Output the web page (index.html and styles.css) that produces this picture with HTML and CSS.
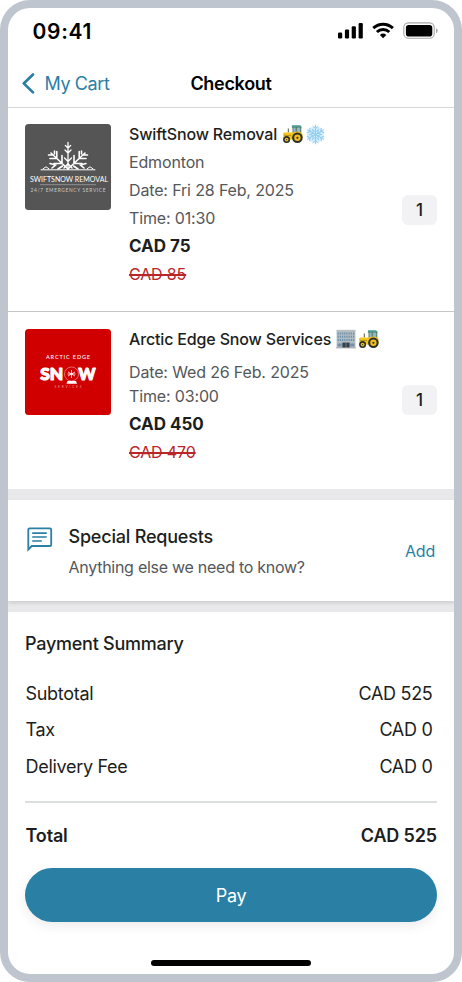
FILE: index.html
```html
<!DOCTYPE html>
<html lang="en">
<head>
<meta charset="utf-8">
<title>Checkout</title>
<link rel="stylesheet" href="styles.css">
</head>
<body>
<svg class="defs" width="0" height="0" aria-hidden="true">
  <symbol id="tractor" viewBox="0 0 22 20">
    <path d="M11.500 2.500h6.500l1 1.200v6h-8z" fill="#8fb9c6"/>
    <path d="M10 1.200h8.200l1.300 1.500v1H9.800z" fill="#4d9a94"/>
    <path d="M11 3v8M14.200 3v7M18.800 3v7" stroke="#4c6a4a" stroke-width=".9"/>
    <path d="M6.300 4.500v4" stroke="#55523a" stroke-width="1"/>
    <path d="M1 9.600 2.200 8.400H12l1.500 2.300v4.800H1.600z" fill="#f5c61c"/>
    <path d="M2 11.400h7" stroke="#a0861a" stroke-width=".8"/>
    <path d="M9 14.500V11c2-4 9-5 11.500-1v4z" fill="#f0bf1d"/>
    <circle cx="4.600" cy="15.600" r="3.500" fill="#2d2e26"/>
    <circle cx="4.600" cy="15.600" r="1.900" fill="#f0bf1d"/>
    <circle cx="4.600" cy="15.600" r=".7" fill="#433b1c"/>
    <circle cx="15.400" cy="13.800" r="5.300" fill="#2d2e26"/>
    <circle cx="15.400" cy="13.800" r="3.200" fill="#f0bf1d"/>
    <circle cx="15.400" cy="13.800" r="1.100" fill="#433b1c"/>
  </symbol>
  <symbol id="snowflake" viewBox="0 0 22 22">
    <circle cx="11" cy="11" r="9" fill="#d3edfa"/>
    <g stroke="#8fcdf0" stroke-width="1" stroke-linecap="round" fill="none">
      <path id="arm" d="M11 11V1.200M8.400 2.400 11 4.800l2.600-2.400M8 5.800l3 2.600 3-2.600"/>
      <use href="#arm" transform="rotate(60 11 11)"/>
      <use href="#arm" transform="rotate(120 11 11)"/>
      <use href="#arm" transform="rotate(180 11 11)"/>
      <use href="#arm" transform="rotate(240 11 11)"/>
      <use href="#arm" transform="rotate(300 11 11)"/>
    </g>
  </symbol>
  <symbol id="office" viewBox="0 0 20 20">
    <path d="M.6 1.200h18.800V19H.6z" fill="#b0bcc4"/>
    <path d="M.6.8h18.800v1.600H.6z" fill="#b9c0c3"/>
    <path d="M1.600 4.500h17M1.600 7.700h17M1.600 10.900h17" stroke="#6f90a9" stroke-width="2" stroke-dasharray="1.200 1"/>
    <path d="M1.600 14.600h4.200v3H1.600zM14.200 14.600h4.200v3h-4.200z" fill="#7790a3"/>
    <path d="M6.400 13.600h7.200V19H6.400z" fill="#343f49"/>
    <path d="M10 14v5" stroke="#8a98a3" stroke-width=".7"/>
    <path d="M0 18.400h20v1H0z" fill="#a9adb0"/>
  </symbol>
</svg>
<main class="phone">
  <header class="status">
    <span class="clock">09:41</span>
    <svg class="status-icons" width="100" height="18" viewBox="0 0 100 18">
      <rect x="0" y="9.500" width="4.200" height="6" rx="1.200"/>
      <rect x="6.900" y="6.500" width="4.200" height="9" rx="1.200"/>
      <rect x="13.700" y="3.200" width="4.200" height="12.300" rx="1.200"/>
      <rect x="20.600" y="0" width="4.200" height="15.500" rx="1.200"/>
      <g fill="none" stroke="#000" stroke-width="2.900">
        <path d="M35.300 5.100a14.200 14.200 0 0 1 19.600 0"/>
        <path d="M38.900 9a9 9 0 0 1 12.400 0"/>
      </g>
      <path d="M45.100 15.300 41.900 12a4.800 4.800 0 0 1 6.400 0z"/>
      <rect x="65.800" y="-.1" width="30.400" height="15.400" rx="4.600" fill="none" stroke="#a6a6a6" stroke-width="1.100"/>
      <rect x="67.900" y="1.900" width="26.400" height="11.600" rx="2.800"/>
      <path d="M98 5.200c2.200.8 2.200 4.200 0 5z" fill="#a6a6a6"/>
    </svg>
  </header>

  <nav class="nav">
    <a class="back">
      <svg width="13" height="21" viewBox="0 0 13 21"><path d="M11 1.500 1.700 10.400 11 19.400" fill="none" stroke="#2a7fa5" stroke-width="2.700" stroke-linecap="round" stroke-linejoin="round"/></svg>
      <span>My Cart</span>
    </a>
    <h1>Checkout</h1>
  </nav>

  <section class="item item-first">
    <svg class="thumb" width="86" height="86" viewBox="0 0 86 86">
      <rect width="86" height="86" rx="3.500" fill="#555"/>
      <g stroke="#fff" fill="none" stroke-linecap="round">
        <path d="M43 45V18.500M40.400 21.500l2.600 2.600 2.600-2.600M40 26l3 3 3-3M39.500 34l3.500 3.500 3.500-3.500" stroke-width="1.300"/>
        <g stroke-width="1.600">
          <path d="M43 45 26 29M25 34.500h6.800V27.500M29 39.500h8v-8M23.500 31h4M29.500 27v3"/>
          <path d="M43 45 60 29M61 34.500h-6.800V27.500M57 39.500h-8v-8M62.500 31h-4M56.500 27v3"/>
          <path d="M27 44l3.500-3-5.500-1.500M59 44l-3.500-3 5.500-1.500M33 45l4.500-3M53 45l-4.500-3M39 44l4-4 4 4"/>
        </g>
        <path d="M16 45.800h54M18 44.800l3-2 3 2M62 44.800l3-2 3 2" stroke-width="1"/>
      </g>
      <text class="swift-name" x="5" y="58.300" textLength="78" lengthAdjust="spacingAndGlyphs">SWIFTSNOW REMOVAL</text>
      <path d="M15 60.700h56" stroke="#aaa" stroke-width=".7"/>
      <text class="swift-tag" x="5.500" y="67.500" textLength="75" lengthAdjust="spacing">24/7 EMERGENCY SERVICE</text>
    </svg>
    <div class="info">
      <h2><span>SwiftSnow Removal</span>
        <svg class="emoji" width="22" height="20"><use href="#tractor"/></svg><svg class="emoji" width="21" height="21"><use href="#snowflake"/></svg></h2>
      <p>Edmonton</p>
      <p>Date: Fri 28 Feb, 2025</p>
      <p>Time: 01:30</p>
      <p class="price">CAD 75</p>
      <p class="old"><s>CAD 85</s></p>
    </div>
    <span class="qty">1</span>
  </section>

  <section class="item item-second">
    <svg class="thumb" width="86" height="86" viewBox="0 0 86 86">
      <rect width="86" height="86" rx="3.500" fill="#d00000"/>
      <text class="arctic-top" x="21" y="30.200" textLength="44">ARCTIC EDGE</text>
      <text class="arctic-snow" x="15.300" y="51.300" textLength="23" lengthAdjust="spacingAndGlyphs">SN</text>
      <text class="arctic-snow" x="53.500" y="51.300" textLength="17" lengthAdjust="spacingAndGlyphs">W</text>
      <circle cx="46.500" cy="45" r="7" fill="none" stroke="#ee9a9a" stroke-width=".7"/>
      <path d="M46.500 41v8M43 43l7 4M50 43l-7 4M42.500 45h8" stroke="#fff" stroke-width=".8"/>
      <path d="M42.500 52h8.500l1 2.700H41.500z" fill="#fff"/>
      <text class="arctic-sub" x="29.500" y="59" textLength="27">SERVICES</text>
    </svg>
    <div class="info">
      <h2><span>Arctic Edge Snow Services</span>
        <svg class="emoji" width="20" height="20"><use href="#office"/></svg><svg class="emoji tractor-next" width="22" height="20"><use href="#tractor"/></svg></h2>
      <p>Date: Wed 26 Feb. 2025</p>
      <p>Time: 03:00</p>
      <p class="price">CAD 450</p>
      <p class="old"><s>CAD 470</s></p>
    </div>
    <span class="qty">1</span>
  </section>

  <section class="requests">
    <svg width="26" height="26" viewBox="0 0 26 26" fill="none" stroke="#2a7fa5">
      <path d="M1.300 22.500V2.600q0-1.300 1.300-1.300h20.300q1.300 0 1.300 1.300v15.100q0 1.300-1.300 1.300H4.700z" stroke-width="1.800"/>
      <path d="M5.200 6.200h14.500M5.200 10h14.500M5.200 14h9.600" stroke-width="1.700"/>
    </svg>
    <div class="requests-text">
      <h2>Special Requests</h2>
      <p>Anything else we need to know?</p>
    </div>
    <a class="add">Add</a>
  </section>

  <section class="summary">
    <h2>Payment Summary</h2>
    <div class="row"><span>Subtotal</span><span>CAD 525</span></div>
    <div class="row"><span>Tax</span><span>CAD 0</span></div>
    <div class="row"><span>Delivery Fee</span><span>CAD 0</span></div>
    <hr>
    <div class="row total"><span>Total</span><span>CAD 525</span></div>
    <button class="pay">Pay</button>
  </section>
  <div class="home-bar"></div>
</main>
</body>
</html>
```
FILE: styles.css
```css
* { box-sizing: border-box; margin: 0; padding: 0; }
body { background: #fff; font-family: Inter, "Liberation Sans", sans-serif; color: #1c1e20; }
svg { display: block; flex: none; overflow: visible; }
.defs { position: absolute; }
h1, h2 { font-weight: 500; }
.phone {
  width: 462px; height: 982px; border: 8px solid #bfc5ce; border-radius: 30px;
  background: #fff; overflow: hidden; display: flex; flex-direction: column;
}
.status { height: 52px; padding: 0 16px 0 24.500px; display: flex; align-items: flex-start; justify-content: space-between; }
.clock { font-size: 21px; font-weight: 600; line-height: 24px; margin-top: 12px; color: #000; letter-spacing: .7px; }
.status-icons { margin-top: 15px; }
.nav {
  height: 48px; border-bottom: 1px solid #d5d9db; padding: 0 14px;
  display: grid; grid-template-columns: 1fr auto 1fr; align-items: center;
}
.back { display: flex; align-items: center; gap: 9.500px; color: #2a7fa5; font-size: 18px; line-height: 24px; letter-spacing: -.4px; }
.nav h1 { font-size: 18px; line-height: 24px; color: #000; font-weight: 600; letter-spacing: -.3px; }
.item { display: flex; padding: 0 17px; }
.item-first { height: 204px; padding-top: 16.400px; border-bottom: 1px solid #c4c7c9; }
.item-second { height: 177px; padding-top: 17.400px; }
.info { flex: 1; margin: -.4px 0 0 18px; font-size: 16px; letter-spacing: -.15px; color: #54575a; }
.info h2 { font-size: 16px; line-height: 20px; height: 20px; color: #1c1e20; display: flex; align-items: center; white-space: nowrap; letter-spacing: -.16px; }
.info h2 span { margin-right: 5px; }
.emoji + .emoji { margin-left: 1px; }
.emoji + .tractor-next { margin-left: 2px; }
.item-first .info p { line-height: 28px; }
.item-first .info h2 { margin-bottom: 4px; }
.item-second .info h2 { margin-bottom: 11px; }
.item-second .info p { line-height: 28px; }
.item-second .info p:nth-of-type(1) { line-height: 24px; }
.item-second .info p:nth-of-type(2) { line-height: 24px; margin-bottom: 2px; }
.info .price { font-weight: 700; font-size: 17px; letter-spacing: -.02px; color: #1c1e20; }
.info .old { color: #b8262a; }
.old s { text-decoration-thickness: 2px; }
.qty {
  flex: none; width: 35px; height: 30px; border-radius: 6px; background: #f2f2f4;
  font-size: 17px; line-height: 30px; font-weight: 500; text-align: center;
}
.item-first .qty { margin-top: 70.600px; }
.item-second .qty { margin-top: 55.600px; }
.swift-name { font: 8.200px Lato, sans-serif; fill: #fff; }
.swift-tag { font: 4.800px Lato, sans-serif; fill: #ccc; }
.arctic-top { font: 500 5.500px Lato, sans-serif; fill: #fff; }
.arctic-snow { font: 900 16px Lato, sans-serif; fill: #fff; stroke: #fff; stroke-width: 1.100px; stroke-linejoin: round; }
.arctic-sub { font: 3.200px Lato, sans-serif; fill: #f0a0a0; }
.requests {
  height: 101px; margin: 11px 0; padding: 27px 19px 0; display: flex; background: #fff;
  box-shadow: 0 2px 4px rgba(0, 0, 0, .13), 0 0 0 11px #e9e9eb;
}
.requests-text { flex: 1; margin-left: 15.500px; }
.requests h2 { font-size: 18px; line-height: 22px; margin-top: -1px; letter-spacing: -.2px; }
.requests p { font-size: 16px; line-height: 20px; margin-top: 9px; letter-spacing: -.27px; color: #54575a; }
.add { color: #2a7fa5; font-size: 16px; line-height: 20px; margin-top: 14px; letter-spacing: -.2px; }
.summary { padding: 19.500px 17px 0; font-size: 18px; height: 348px; letter-spacing: -.3px; }
.summary h2 { font-size: 18px; line-height: 24px; margin-bottom: 20px; letter-spacing: -.25px; }
.row { display: flex; justify-content: space-between; line-height: 36.700px; padding: 0 4.500px 0 .5px; }
.summary hr { border: 0; height: 2px; background: #dcdfe0; margin: 15.500px 0 15px; }
.total { font-weight: 600; padding-right: 0; letter-spacing: -.15px; }
.pay {
  display: block; width: 100%; height: 54px; margin-top: 13px; border: 0; border-radius: 27px;
  background: #2a7fa5; color: #fff; font: 400 18px Inter, sans-serif; letter-spacing: -.3px; padding-top: 1px;
  box-shadow: 0 4px 12px rgba(0, 0, 0, .08);
}
.home-bar { width: 160px; height: 5.500px; border-radius: 3px; background: #000; margin: 0 auto; }
```
